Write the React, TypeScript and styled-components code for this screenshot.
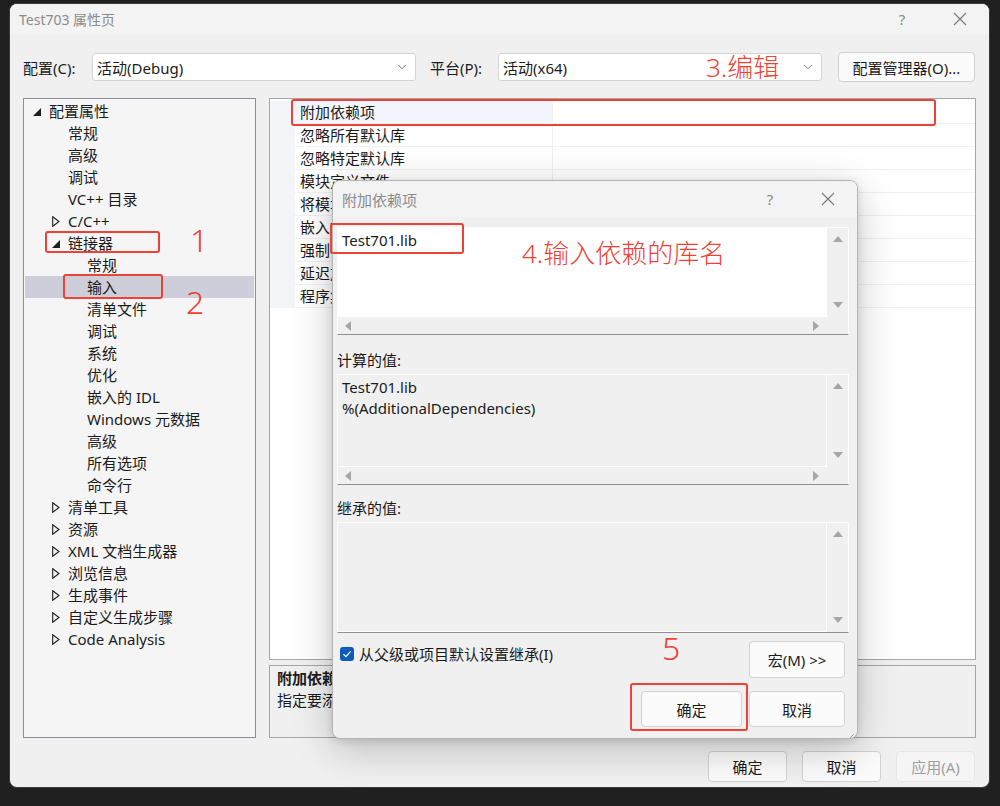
import React from "react";
import styled, { createGlobalStyle } from "styled-components";
import { ChevronDown } from "lucide-react";

const RED = "#ec4336";
const FONT = `"Noto Sans", "Noto Sans CJK SC", sans-serif`;

const GlobalStyle = createGlobalStyle`
  html, body { margin: 0; padding: 0; background: #1f1f1f; }
  body { font-family: ${FONT}; font-size: 15px; color: #1b1b1b; }
  * { box-sizing: border-box; }
`;

const Desktop = styled.div`
  position: relative;
  width: 1000px;
  height: 806px;
  overflow: hidden;
  background: #1f1f1f;
  padding: 3px 10px 0 9px;
`;

const Window = styled.div`
  width: 981px;
  height: 785px;
  background: #f0f0f0;
  border: 1px solid #3b3b3b;
  border-radius: 8px;
  display: flex;
  flex-direction: column;
  overflow: hidden;
`;

const TitleBar = styled.div`
  height: 30px;
  display: flex;
  align-items: center;
  justify-content: space-between;
  padding-left: 9px;
  background: #f3f3f3;
`;

const WindowTitle = styled.span<{ $size?: number }>`
  font-size: ${(p) => p.$size ?? 14}px;
  color: #8b8b8b;
`;

const TitleButtons = styled.div`
  display: flex;
  height: 100%;
`;

const TitleButton = styled.div`
  width: 58px;
  display: flex;
  align-items: center;
  justify-content: center;
  color: #8a8a8a;
  font-size: 15px;
`;

const CloseGlyph = () => (
  <svg width="14" height="14" viewBox="0 0 14 14">
    <path d="M1 1 L13 13 M13 1 L1 13" stroke="#7c7c7c" strokeWidth="1.2" fill="none" />
  </svg>
);

const ConfigRow = styled.div`
  height: 30px;
  margin-top: 18px;
  padding-left: 13px;
  display: flex;
  align-items: center;
`;

const FieldLabel = styled.span<{ $w: number; $ml?: number }>`
  width: ${(p) => p.$w}px;
  margin-left: ${(p) => p.$ml ?? 0}px;
  font-size: 15px;
`;

const Select = styled.div`
  width: 324px;
  height: 28px;
  background: #fff;
  border: 1px solid #d3d3d3;
  border-radius: 3px;
  display: flex;
  align-items: center;
  justify-content: space-between;
  padding: 0 6px 0 4px;
  font-size: 15px;
`;

const ManagerButton = styled.div`
  margin-left: 16px;
  width: 137px;
  height: 30px;
  background: #fbfbfb;
  border: 1px solid #d0d0d0;
  border-radius: 4px;
  display: flex;
  align-items: center;
  justify-content: center;
  font-size: 15px;
`;

const Main = styled.div`
  margin-top: 16px;
  padding-left: 13px;
  height: 640px;
  display: grid;
  grid-template-columns: 233px 707px;
  column-gap: 13px;
`;

const Tree = styled.div`
  background: #f5f5f5;
  border: 1px solid #8e8e98;
  padding-top: 1px;
`;

const TreeRow = styled.div<{ $level: number; $selected?: boolean }>`
  height: 22px;
  margin: 0 1px;
  display: flex;
  align-items: center;
  padding-left: ${(p) => 8 + p.$level * 19}px;
  background: ${(p) => (p.$selected ? "#cdceda" : "transparent")};
  font-size: 15px;
  line-height: 22px;
  white-space: nowrap;
`;

const ArrowSlot = styled.span`
  width: 16px;
  height: 22px;
  display: flex;
  align-items: center;
  flex-shrink: 0;
`;

const OpenArrow = () => (
  <svg width="9" height="9" viewBox="0 0 9 9" style={{ marginTop: 2 }}>
    <polygon points="8,0 8,8 0,8" fill="#1e1e1e" />
  </svg>
);

const ClosedArrow = () => (
  <svg width="8" height="11" viewBox="0 0 8 11">
    <polygon points="0.7,0.7 7,5.5 0.7,10.3" fill="none" stroke="#1e1e1e" strokeWidth="1.1" />
  </svg>
);

const RightColumn = styled.div`
  display: flex;
  flex-direction: column;
  gap: 5px;
`;

const PropGrid = styled.div`
  flex: 1;
  background: #fff;
  border: 1px solid #a6a6a6;
  padding-top: 2px;
`;

const PropRow = styled.div`
  height: 23px;
  display: grid;
  grid-template-columns: 25px 258px 1fr;
`;

const Gutter = styled.div`
  background: #f3f5f9;
`;

const NameCell = styled.div<{ $active?: boolean }>`
  background: ${(p) => (p.$active ? "#f2f5fb" : "#fff")};
  border-bottom: 1px solid #eef0f4;
  border-right: 1px solid #eef0f4;
  padding-left: 5px;
  font-size: 15px;
  line-height: 22px;
  white-space: nowrap;
  overflow: hidden;
`;

const ValueCell = styled.div`
  border-bottom: 1px solid #eef0f4;
`;

const DescPane = styled.div`
  height: 73px;
  border: 1px solid #a6a6a6;
  background: #f0f0f0;
  padding: 1px 7px;
  font-size: 15px;
  line-height: 22px;
`;

const DescTitle = styled.div`
  font-weight: 700;
`;

const Footer = styled.div`
  margin-top: 13px;
  padding-right: 14px;
  display: flex;
  justify-content: flex-end;
  gap: 15px;
`;

const Button = styled.div<{ $w: number; $h?: number; $disabled?: boolean }>`
  width: ${(p) => p.$w}px;
  height: ${(p) => p.$h ?? 31}px;
  background: ${(p) => (p.$disabled ? "#f5f5f5" : "#fbfbfb")};
  border: 1px solid ${(p) => (p.$disabled ? "#e6e6e6" : "#d2d2d2")};
  border-radius: 4px;
  color: ${(p) => (p.$disabled ? "#9e9e9e" : "#1b1b1b")};
  display: flex;
  align-items: center;
  justify-content: center;
  font-size: 15px;
  white-space: nowrap;
`;

/* ---------- dialog ---------- */

const Dialog = styled.div`
  position: absolute;
  left: 332px;
  top: 180px;
  width: 526px;
  height: 559px;
  background: #f0f0f0;
  border: 1px solid #b4b4b4;
  border-radius: 8px;
  box-shadow: 0 10px 40px rgba(0, 0, 0, 0.22), 0 2px 8px rgba(0, 0, 0, 0.12);
  display: flex;
  flex-direction: column;
  overflow: hidden;
`;

const DialogTitleBar = styled(TitleBar)`
  height: 36px;
`;

const DialogBody = styled.div`
  padding: 10px 8px 0 4px;
  display: flex;
  flex-direction: column;
`;

const ValueBox = styled.div<{ $h: number; $hscroll?: boolean }>`
  height: ${(p) => p.$h}px;
  display: grid;
  grid-template-columns: 1fr 21px;
  grid-template-rows: ${(p) => (p.$hscroll ? "1fr 17px" : "1fr")};
  border: 1px solid #fcfcfc;
  border-bottom-color: #8f8f8f;
  background: #f0f0f0;
`;

const BoxText = styled.div<{ $white?: boolean }>`
  background: ${(p) => (p.$white ? "#fff" : "#f0f0f0")};
  border-right: 1px solid #fff;
  border-bottom: 1px solid #fff;
  padding: 2px 4px;
  font-size: 15px;
  line-height: 21px;
  white-space: pre;
`;

const VScroll = styled.div`
  display: flex;
  flex-direction: column;
  justify-content: space-between;
  align-items: center;
  padding: 8px 0 9px;
`;

const HScroll = styled.div`
  display: flex;
  justify-content: space-between;
  align-items: center;
  padding: 0 8px 0 7px;
`;

const ARROW = "#a6a6a6";
const Tri = ({ dir }: { dir: "up" | "down" | "left" | "right" }) => {
  const pts = {
    up: "0,6 5,0 10,6",
    down: "0,0 10,0 5,6",
    left: "6,0 6,10 0,5",
    right: "0,0 6,5 0,10",
  }[dir];
  const vertical = dir === "up" || dir === "down";
  return (
    <svg width={vertical ? 10 : 6} height={vertical ? 6 : 10} viewBox={vertical ? "0 0 10 6" : "0 0 6 10"}>
      <polygon points={pts} fill={ARROW} />
    </svg>
  );
};

const SectionLabel = styled.div<{ $mt: number }>`
  margin-top: ${(p) => p.$mt}px;
  margin-bottom: 3px;
  height: 22px;
  line-height: 22px;
  font-size: 15px;
`;

const DialogBottom = styled.div`
  margin-top: 8px;
  padding-right: 4px;
  display: grid;
  grid-template-columns: 1fr 101px 96px;
  grid-template-rows: 37px 36px;
  column-gap: 7px;
  row-gap: 13px;
`;

const CheckRow = styled.label`
  grid-column: 1 / 3;
  display: flex;
  align-items: flex-start;
  gap: 5px;
  padding: 6px 0 0 3px;
  font-size: 15px;
  line-height: 15px;
`;

const Checkbox = styled.span`
  width: 14px;
  height: 14px;
  border-radius: 3px;
  background: #0f5cb8;
  display: flex;
  align-items: center;
  justify-content: center;
  flex-shrink: 0;
`;

const Grip = styled.div`
  position: absolute;
  right: 2px;
  bottom: 2px;
  width: 10px;
  height: 10px;
`;

/* ---------- annotations ---------- */

const Mark = styled.div<{ $x: number; $y: number; $w: number; $h: number }>`
  position: absolute;
  left: ${(p) => p.$x}px;
  top: ${(p) => p.$y}px;
  width: ${(p) => p.$w}px;
  height: ${(p) => p.$h}px;
  border: 2px solid ${RED};
  border-radius: 3px;
  pointer-events: none;
`;

const Note = styled.div<{ $x: number; $y: number; $size: number }>`
  position: absolute;
  left: ${(p) => p.$x}px;
  top: ${(p) => p.$y}px;
  font-size: ${(p) => p.$size}px;
  line-height: 1;
  color: ${RED};
  white-space: nowrap;
  font-weight: 300;
`;

type TreeItem = { label: string; level: number; arrow?: "open" | "closed"; selected?: boolean };

const treeItems: TreeItem[] = [
  { label: "配置属性", level: 0, arrow: "open" },
  { label: "常规", level: 1 },
  { label: "高级", level: 1 },
  { label: "调试", level: 1 },
  { label: "VC++ 目录", level: 1 },
  { label: "C/C++", level: 1, arrow: "closed" },
  { label: "链接器", level: 1, arrow: "open" },
  { label: "常规", level: 2 },
  { label: "输入", level: 2, selected: true },
  { label: "清单文件", level: 2 },
  { label: "调试", level: 2 },
  { label: "系统", level: 2 },
  { label: "优化", level: 2 },
  { label: "嵌入的 IDL", level: 2 },
  { label: "Windows 元数据", level: 2 },
  { label: "高级", level: 2 },
  { label: "所有选项", level: 2 },
  { label: "命令行", level: 2 },
  { label: "清单工具", level: 1, arrow: "closed" },
  { label: "资源", level: 1, arrow: "closed" },
  { label: "XML 文档生成器", level: 1, arrow: "closed" },
  { label: "浏览信息", level: 1, arrow: "closed" },
  { label: "生成事件", level: 1, arrow: "closed" },
  { label: "自定义生成步骤", level: 1, arrow: "closed" },
  { label: "Code Analysis", level: 1, arrow: "closed" },
];

const propNames = [
  "附加依赖项",
  "忽略所有默认库",
  "忽略特定默认库",
  "模块定义文件",
  "将模块添加到程序集",
  "嵌入托管资源文件",
  "强制符号引用",
  "延迟加载的 DLL",
  "程序集链接资源",
];

export default function App() {
  return (
    <Desktop>
      <GlobalStyle />
      <Window>
        <TitleBar>
          <WindowTitle>Test703 属性页</WindowTitle>
          <TitleButtons>
            <TitleButton>?</TitleButton>
            <TitleButton>
              <CloseGlyph />
            </TitleButton>
          </TitleButtons>
        </TitleBar>

        <ConfigRow>
          <FieldLabel $w={69}>配置(C):</FieldLabel>
          <Select>
            <span>活动(Debug)</span>
            <ChevronDown size={14} strokeWidth={1.4} color="#555" />
          </Select>
          <FieldLabel $w={68} $ml={14}>平台(P):</FieldLabel>
          <Select>
            <span>活动(x64)</span>
            <ChevronDown size={14} strokeWidth={1.4} color="#555" />
          </Select>
          <ManagerButton>配置管理器(O)...</ManagerButton>
        </ConfigRow>

        <Main>
          <Tree>
            {treeItems.map((t, i) => (
              <TreeRow key={i} $level={t.level} $selected={t.selected}>
                <ArrowSlot>
                  {t.arrow === "open" && <OpenArrow />}
                  {t.arrow === "closed" && <ClosedArrow />}
                </ArrowSlot>
                {t.label}
              </TreeRow>
            ))}
          </Tree>

          <RightColumn>
            <PropGrid>
              {propNames.map((n, i) => (
                <PropRow key={n}>
                  <Gutter />
                  <NameCell $active={i === 0}>{n}</NameCell>
                  <ValueCell />
                </PropRow>
              ))}
            </PropGrid>
            <DescPane>
              <DescTitle>附加依赖项</DescTitle>
              <div>指定要添加到链接命令行的附加项。[例如 kernel32.lib]</div>
            </DescPane>
          </RightColumn>
        </Main>

        <Footer>
          <Button $w={79}>确定</Button>
          <Button $w={79}>取消</Button>
          <Button $w={79} $disabled>应用(A)</Button>
        </Footer>
      </Window>

      <Dialog>
        <DialogTitleBar>
          <WindowTitle $size={15}>附加依赖项</WindowTitle>
          <TitleButtons>
            <TitleButton>?</TitleButton>
            <TitleButton>
              <CloseGlyph />
            </TitleButton>
          </TitleButtons>
        </DialogTitleBar>
        <DialogBody>
          <ValueBox $h={108} $hscroll>
            <BoxText $white>Test701.lib</BoxText>
            <VScroll>
              <Tri dir="up" />
              <Tri dir="down" />
            </VScroll>
            <HScroll>
              <Tri dir="left" />
              <Tri dir="right" />
            </HScroll>
            <div />
          </ValueBox>

          <SectionLabel $mt={14}>计算的值:</SectionLabel>
          <ValueBox $h={111} $hscroll>
            <BoxText>{"Test701.lib\n%(AdditionalDependencies)"}</BoxText>
            <VScroll>
              <Tri dir="up" />
              <Tri dir="down" />
            </VScroll>
            <HScroll>
              <Tri dir="left" />
              <Tri dir="right" />
            </HScroll>
            <div />
          </ValueBox>

          <SectionLabel $mt={12}>继承的值:</SectionLabel>
          <ValueBox $h={111}>
            <BoxText />
            <VScroll>
              <Tri dir="up" />
              <Tri dir="down" />
            </VScroll>
          </ValueBox>

          <DialogBottom>
            <CheckRow>
              <Checkbox>
                <svg width="10" height="10" viewBox="0 0 10 10">
                  <path d="M1.5 5.2 L4 7.6 L8.6 2.4" stroke="#fff" strokeWidth="1.3" fill="none" />
                </svg>
              </Checkbox>
              从父级或项目默认设置继承(I)
            </CheckRow>
            <Button $w={96} $h={37}>宏(M) &gt;&gt;</Button>
            <div />
            <Button $w={101} $h={36}>确定</Button>
            <Button $w={96} $h={36}>取消</Button>
          </DialogBottom>
        </DialogBody>
        <Grip>
          <svg width="10" height="10" viewBox="0 0 10 10">
            <path d="M9 2 L2 9 M9 5 L5 9 M9 8 L8 9" stroke="#a0a0a0" strokeWidth="1" />
          </svg>
        </Grip>
      </Dialog>

      <Mark $x={291} $y={99} $w={645} $h={27} />
      <Mark $x={45} $y={231} $w={115} $h={22} />
      <Mark $x={63} $y={274} $w={100} $h={25} />
      <Mark $x={330} $y={223} $w={134} $h={31} />
      <Mark $x={630} $y={683} $w={118} $h={48} />

      <Note $x={706} $y={54} $size={26}>3.编辑</Note>
      <Note $x={190} $y={224} $size={32}>1</Note>
      <Note $x={186} $y={286} $size={32}>2</Note>
      <Note $x={522} $y={240} $size={26}>4.输入依赖的库名</Note>
      <Note $x={662} $y={632} $size={32}>5</Note>
    </Desktop>
  );
}
